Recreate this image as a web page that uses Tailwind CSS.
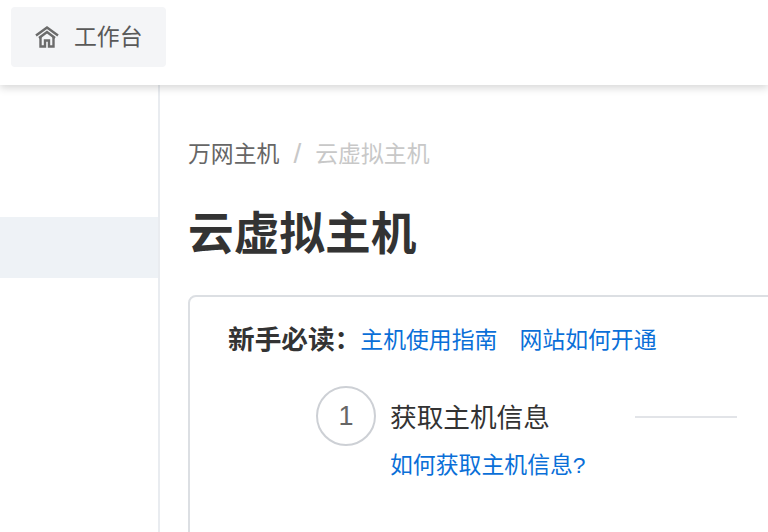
<!DOCTYPE html>
<html lang="zh-CN">
<head>
    <meta charset="UTF-8">
    <meta name="viewport" content="width=device-width, initial-scale=1.0">
    <title>云虚拟主机</title>
    <script src="https://cdn.jsdelivr.net/npm/@tailwindcss/browser@4"></script>
</head>
<body class="h-[532px] w-[768px] overflow-hidden bg-white font-['Liberation_Sans','Noto_Sans_CJK_SC',sans-serif] text-[22.86px]">
    <!-- Header -->
    <header class="relative z-10 h-[85px] bg-white pl-[11px] pt-[7px] shadow-[0_3px_8px_rgba(0,0,0,0.16)]">
        <div class="flex h-[60px] w-[155px] items-center rounded-[4px] bg-[#f4f5f7] pl-[24px] text-[#595959]">
            <svg class="h-[24px] w-[24px]" viewBox="0 0 24 24" fill="none" stroke="#6b6b6b" stroke-width="2.4" stroke-linejoin="miter">
                <path d="M1 10.5 12 2.5l11 8"/>
                <path d="M4 13 12 7l8 6"/>
                <path d="M5.5 12v9.5h4.5V15.5h4v6h4.5V12"/>
            </svg>
            <span class="ml-[15px]">工作台</span>
        </div>
    </header>

    <div class="flex h-[447px]">
        <!-- Sidebar -->
        <aside class="w-[160px] shrink-0 border-r-2 border-[#e9ecf0] pt-[132px]">
            <div class="h-[61px] bg-[#eef2f6]"></div>
        </aside>

        <!-- Main -->
        <main class="min-w-0 flex-1 overflow-hidden pl-[28px]">
            <nav class="flex h-[32px] mt-[53px] items-center leading-none">
                <span class="text-[#666]">万网主机</span>
                <span class="mx-[14px] text-[28px] text-[#c8c8c8]">/</span>
                <span class="text-[#c8c8c8]">云虚拟主机</span>
            </nav>
            <h1 class="mt-[34px] h-[62px] text-[45.7px] font-bold leading-[62px] text-[#333]">云虚拟主机</h1>

            <section class="mt-[29px] h-[260px] w-[640px] rounded-tl-[8px] border-2 border-[#dcdfe3] pl-[38px] pt-[26px]">
                <div class="flex h-[34px] items-center">
                    <strong class="text-[26.67px] font-bold text-[#333]">新手必读：</strong>
                    <a href="#" class="ml-[-1px] text-[#0a6fd8]">主机使用指南</a>
                    <a href="#" class="ml-[22px] text-[#0a6fd8]">网站如何开通</a>
                </div>

                <div class="ml-[88px] mt-[29px] flex items-start">
                    <div class="flex h-[60px] w-[60px] shrink-0 items-center justify-center rounded-full border-2 border-[#cdd0d5] text-[27px] text-[#666]">1</div>
                    <div class="ml-[14px]">
                        <div class="flex h-[62px] items-center">
                            <span class="mt-[2px] w-[245px] text-[26.67px] text-[#333]">获取主机信息</span>
                            <span class="h-[2px] w-[102px] bg-[#e2e4e8]"></span>
                        </div>
                        <a href="#" class="block text-[#0a6fd8]">如何获取主机信息?</a>
                    </div>
                </div>
            </section>
        </main>
    </div>
</body>
</html>
